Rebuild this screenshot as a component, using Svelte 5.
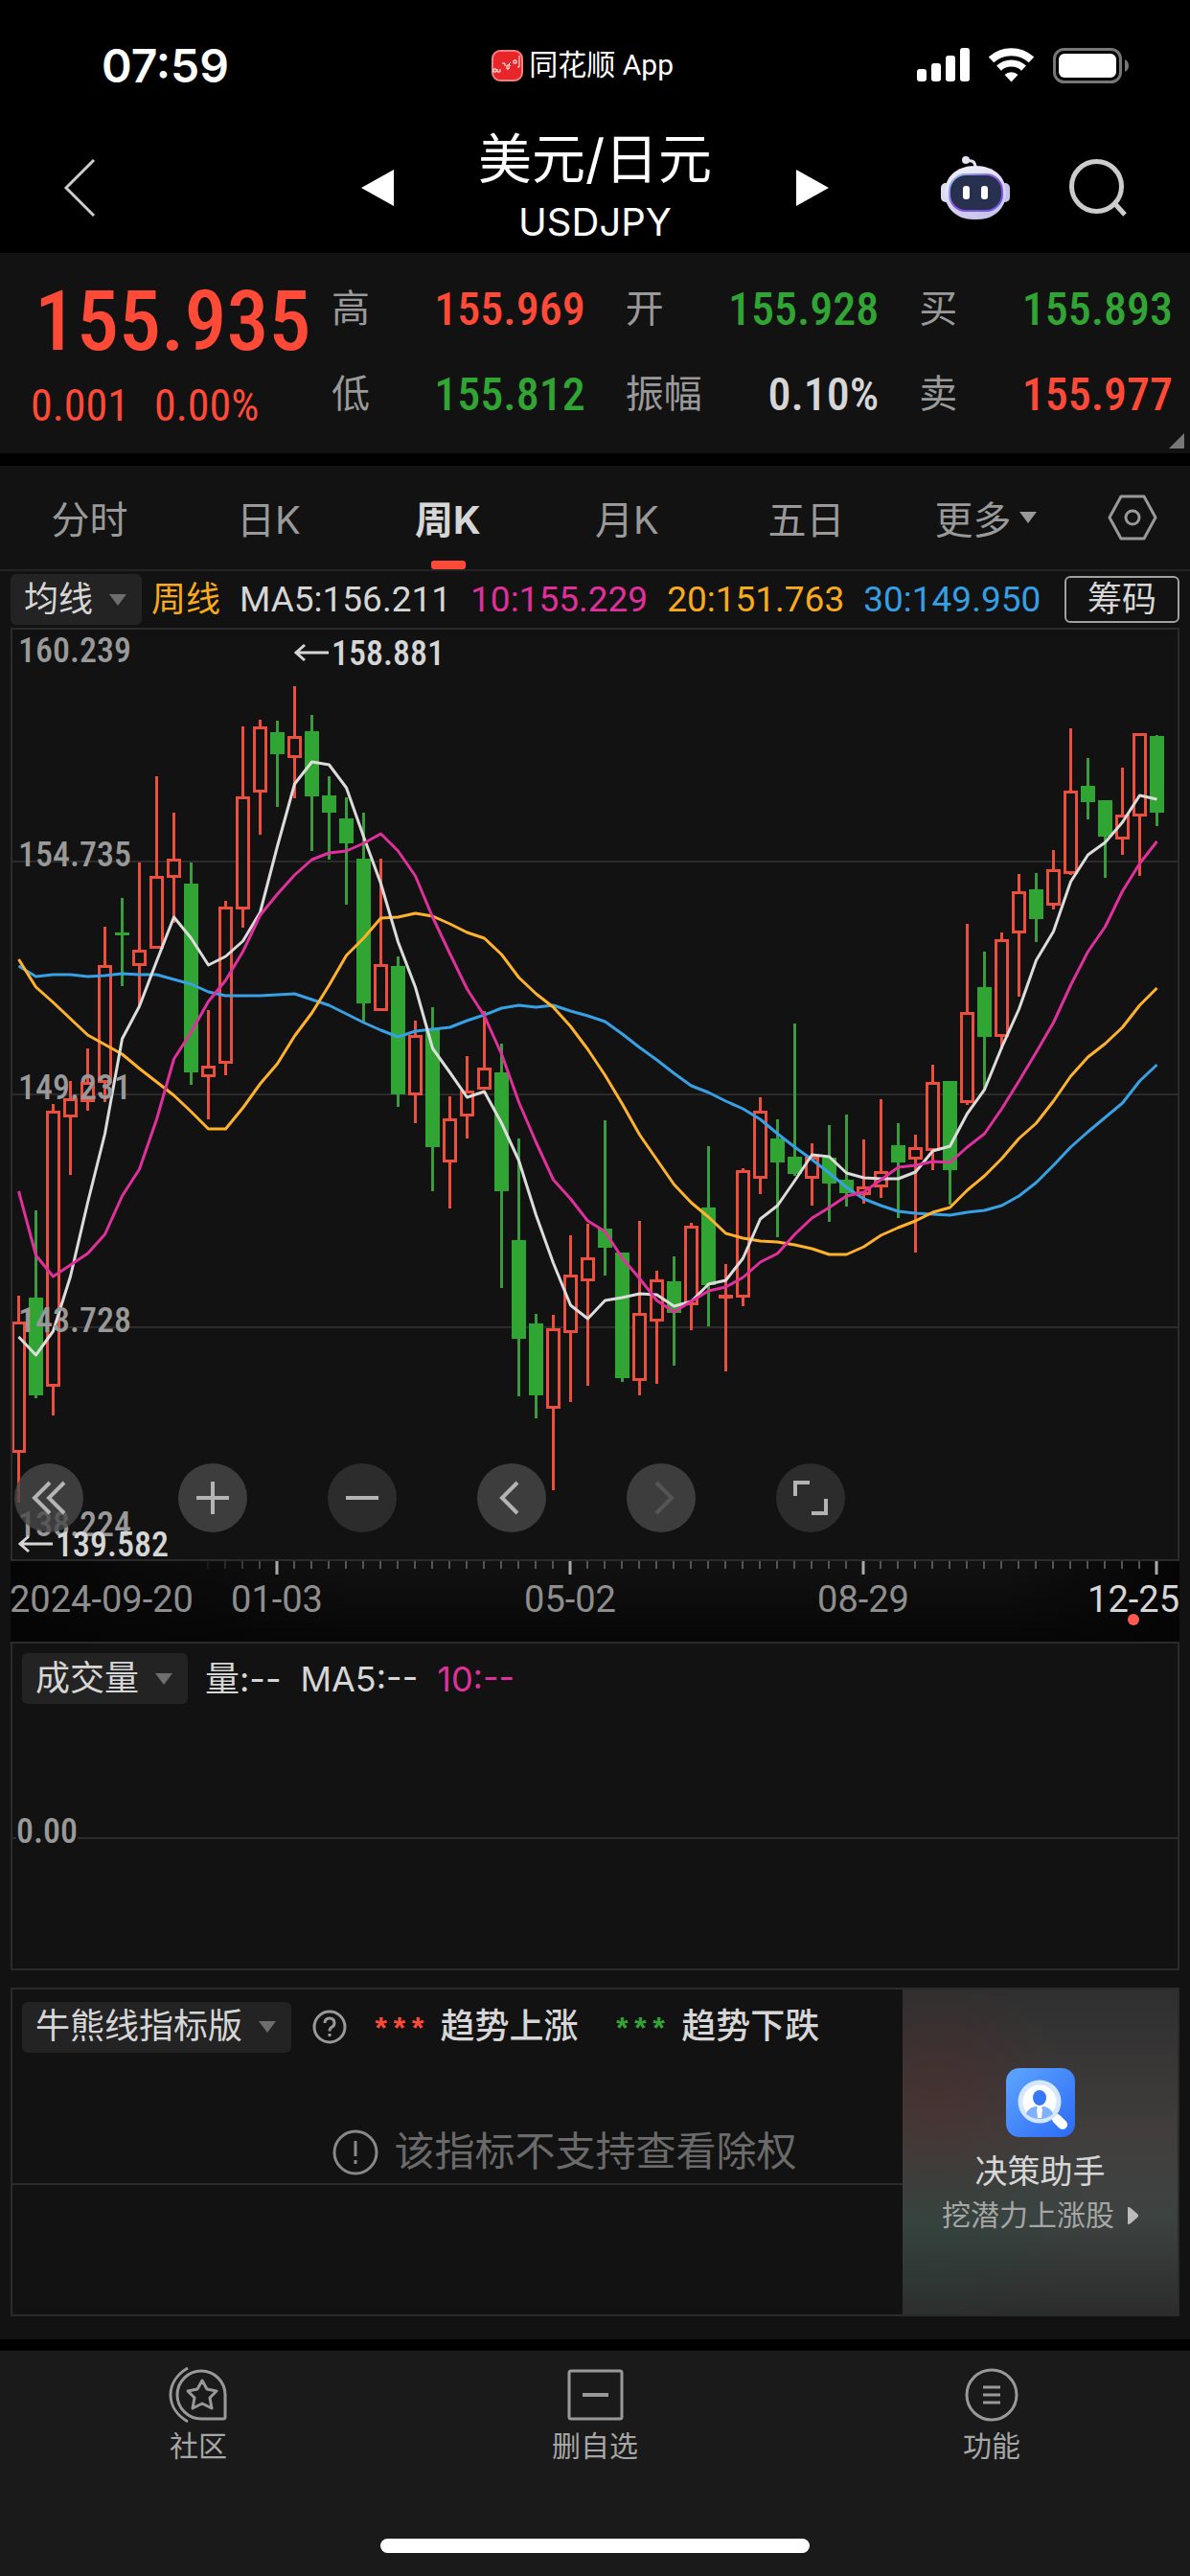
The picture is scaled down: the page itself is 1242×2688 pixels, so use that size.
<!-- script -->
<script lang="ts">
  /* types */
  type Candle = [kind: 'up' | 'down', high: number, top: number, bottom: number, low: number]

  /* quote */
  const stats = [
    { label: '高', value: '155.969', tone: 'red' },
    { label: '开', value: '155.928', tone: 'green' },
    { label: '买', value: '155.893', tone: 'green' },
    { label: '低', value: '155.812', tone: 'green' },
    { label: '振幅', value: '0.10%', tone: 'plain' },
    { label: '卖', value: '155.977', tone: 'red' }
  ]

  /* periods */
  const periods = ['分时', '日K', '周K', '月K', '五日']
  let period = $state('周K')

  /* chart geometry */
  const STEP = 18
  const HALF = 7.5
  const x = (i: number) => 8.5 + i * STEP

  const candles: Candle[] = [
    ['up', 712, 739, 876, 928],
    ['down', 623, 714, 816, 819],
    ['up', 512, 519, 807, 837],
    ['up', 488, 506, 526, 586],
    ['up', 454, 489, 510, 519],
    ['up', 327, 367, 490, 510],
    ['down', 297, 333, 336, 389],
    ['up', 260, 351, 368, 410],
    ['up', 170, 274, 350, 350],
    ['up', 208, 256, 276, 323],
    ['down', 260, 282, 479, 492],
    ['up', 414, 472, 484, 528],
    ['up', 300, 306, 470, 482],
    ['up', 118, 191, 309, 328],
    ['up', 111, 118, 187, 231],
    ['down', 112, 124, 147, 202],
    ['up', 76, 128, 151, 193],
    ['down', 106, 123, 191, 248],
    ['down', 170, 190, 208, 257],
    ['down', 192, 214, 240, 304],
    ['down', 208, 256, 407, 426],
    ['up', 256, 366, 415, 415],
    ['down', 358, 368, 502, 515],
    ['up', 425, 440, 503, 532],
    ['down', 411, 434, 557, 603],
    ['up', 504, 527, 573, 621],
    ['up', 462, 498, 525, 548],
    ['up', 415, 474, 497, 497],
    ['down', 449, 479, 603, 704],
    ['down', 548, 654, 757, 817],
    ['down', 731, 741, 816, 840],
    ['up', 732, 746, 830, 915],
    ['up', 649, 690, 751, 823],
    ['up', 637, 672, 697, 806],
    ['down', 529, 642, 662, 691],
    ['down', 667, 667, 798, 802],
    ['up', 634, 730, 801, 816],
    ['up', 686, 695, 739, 804],
    ['down', 671, 697, 730, 785],
    ['up', 636, 639, 722, 748],
    ['down', 556, 620, 701, 744],
    ['up', 679, 711, 715, 791],
    ['up', 579, 581, 714, 723],
    ['up', 505, 519, 590, 606],
    ['down', 528, 548, 573, 651],
    ['down', 428, 567, 585, 587],
    ['up', 553, 567, 590, 618],
    ['down', 534, 568, 595, 635],
    ['down', 523, 591, 605, 619],
    ['up', 549, 598, 607, 616],
    ['up', 507, 582, 599, 610],
    ['down', 532, 555, 573, 631],
    ['up', 544, 557, 570, 667],
    ['up', 471, 489, 561, 581],
    ['down', 488, 488, 581, 617],
    ['up', 324, 416, 511, 513],
    ['down', 353, 390, 442, 497],
    ['up', 333, 340, 442, 455],
    ['up', 272, 290, 334, 400],
    ['down', 271, 288, 319, 343],
    ['up', 247, 267, 305, 309],
    ['up', 120, 185, 272, 273],
    ['down', 151, 180, 197, 215],
    ['down', 195, 195, 233, 276],
    ['up', 161, 210, 236, 252],
    ['up', 125, 125, 212, 274],
    ['down', 127, 128, 208, 222]
  ]

  const averages = [
    {
      name: 'ma30',
      values: [
        368, 379, 377, 377, 379, 378, 376, 377, 377, 382, 387, 395, 399, 399, 399, 398, 397, 403, 409, 418, 427, 435, 442,
        436, 434, 432, 425, 419, 412, 409, 411, 409, 415, 420, 426, 439, 453, 466, 480, 493, 500, 509, 517, 528, 543, 557,
        570, 584, 599, 611, 618, 624, 626, 627, 628, 625, 623, 618, 608, 594, 576, 557, 541, 526, 511, 488, 471
      ]
    },
    {
      name: 'ma20',
      values: [
        361, 390, 406, 423, 440, 450, 460, 475, 489, 503, 520, 538, 538, 516, 491, 470, 441, 417, 388, 357, 339, 318, 317,
        313, 316, 324, 333, 339, 356, 380, 397, 411, 431, 455, 482, 512, 544, 570, 596, 615, 630, 647, 652, 655, 656, 659,
        663, 669, 669, 661, 649, 641, 634, 625, 620, 602, 587, 569, 548, 532, 509, 483, 463, 449, 432, 409, 391
      ]
    },
    {
      name: 'ma5',
      values: [
        755, 774, 749, 692, 615, 543, 444, 410, 363, 317, 339, 367, 358, 342, 312, 243, 178, 155, 158, 182, 233, 282, 343,
        390, 454, 479, 505, 499, 532, 571, 628, 678, 722, 736, 717, 714, 710, 711, 723, 718, 700, 696, 673, 632, 618, 592,
        565, 567, 584, 589, 590, 590, 583, 561, 556, 522, 497, 453, 413, 362, 332, 280, 252, 239, 218, 190, 194
      ]
    },
    {
      name: 'ma10',
      values: [
        603, 670, 692, 680, 668, 648, 608, 580, 528, 465, 437, 405, 383, 353, 315, 293, 273, 257, 250, 248, 240, 230, 248,
        274, 317, 355, 392, 420, 460, 510, 552, 591, 611, 634, 645, 673, 694, 717, 729, 718, 707, 703, 693, 677, 668, 648,
        631, 620, 608, 604, 591, 578, 576, 572, 573, 557, 543, 517, 488, 458, 427, 388, 353, 327, 290, 261, 238
      ]
    }
  ]

  const gridLines = [259, 502, 745]
  const priceLabels = [
    { text: '160.239', y: 51 },
    { text: '154.735', y: 264 },
    { text: '149.231', y: 507 },
    { text: '143.728', y: 750 },
    { text: '138.224', y: 963 }
  ]

  /* date axis */
  const ticks = Array.from({ length: 56 }, (_, n) => n + 11)
  const dates: Record<number, string> = { 15: '01-03', 32: '05-02', 49: '08-29' }
  const isMajor = (i: number) => i in dates || i === 66

  const linePoints = (values: number[]) => values.map((y, i) => `${x(i)},${y}`).join(' ')
</script>

<!-- template -->
{#snippet caret()}
  <svg class="caret" viewBox="0 0 18 12" aria-hidden="true"><path d="M0 0h18l-9 12z" /></svg>
{/snippet}

{#snippet callout(text: string, left: number, y: number)}
  <path class="arrow" d="M{left + 35} {y - 13}h-34m9 -8l-9 8l9 8" />
  <text class="mark" x={left + 38} {y}>{text}</text>
{/snippet}

<div class="app">
  <div class="status-bar">
    <span class="clock">07:59</span>
    <span class="source">
      <svg class="source-logo" viewBox="0 0 33 33" aria-hidden="true">
        <rect x="1" y="1" width="31" height="31" rx="8" fill="#e8262a" stroke="#f08080" stroke-width="2" />
        <path d="M2 20h3v3h-3zM6 20v3h3v-3M11 14h3v3M16 16v4h2v-4zM20 13l-2 2 2 2M23 11h3v3h-3zM29 6v12h-2" fill="none" stroke="#fff" stroke-width="1" />
      </svg>
      同花顺 App
    </span>
    <span class="signals">
      <svg width="55" height="36" viewBox="0 0 55 36" fill="#fff" aria-hidden="true">
        <rect x="0" y="22" width="10" height="13" rx="3" />
        <rect x="15" y="16" width="10" height="19" rx="3" />
        <rect x="30" y="8" width="10" height="27" rx="3" />
        <rect x="45" y="0" width="10" height="35" rx="3" />
      </svg>
      <svg width="47" height="36" viewBox="0 0 47 36" fill="none" stroke="#fff" aria-hidden="true">
        <path d="M2.5 12.4A31 31 0 0 1 44.500 12.400" stroke-width="8" />
        <path d="M10.500 21.100A19 19 0 0 1 36.500 21.100" stroke-width="7" />
        <path d="M23.500 35.500L16.500 28A10 10 0 0 1 30.500 28Z" fill="#fff" stroke="none" />
      </svg>
      <svg width="79" height="37" viewBox="0 0 79 37" aria-hidden="true">
        <rect x="1.500" y="1.500" width="69" height="34" rx="10" fill="none" stroke="#777" stroke-width="3" />
        <rect x="6" y="6" width="60" height="25" rx="6" fill="#fff" />
        <path d="M75 12q4 2 4 6.500t-4 6.500z" fill="#777" />
      </svg>
    </span>
  </div>

  <header class="header">
    <div class="header-side">
      <button class="icon-button" aria-label="返回">
        <svg width="34" height="60" viewBox="0 0 34 60" fill="none" stroke="#ccc" stroke-width="3"><path d="M32 1L3 30l29 29" /></svg>
      </button>
      <button class="icon-button" aria-label="上一个">
        <svg width="34" height="38" viewBox="0 0 34 38" fill="#fff"><path d="M34 0v38L0 19z" /></svg>
      </button>
    </div>
    <h1 class="title">美元/日元<small>USDJPY</small></h1>
    <div class="header-side right">
      <button class="icon-button" aria-label="下一个">
        <svg width="34" height="38" viewBox="0 0 34 38" fill="#fff"><path d="M0 0v38l34-19z" /></svg>
      </button>
      <div class="header-actions">
        <button class="icon-button" aria-label="智能助手">
          <svg width="72" height="67" viewBox="0 0 72 67">
            <defs>
              <linearGradient id="shell" x1="0" y1="0" x2="0.400" y2="1">
                <stop offset="0" stop-color="#f4f4fc" />
                <stop offset="1" stop-color="#c9c6ee" />
              </linearGradient>
              <linearGradient id="rim" x1="0" y1="0" x2="1" y2="1">
                <stop offset="0" stop-color="#8fd0e8" />
                <stop offset="0.500" stop-color="#8a4fe0" />
                <stop offset="1" stop-color="#6a5ae8" />
              </linearGradient>
            </defs>
            <rect x="0" y="28" width="12" height="20" rx="5" fill="#dcdcf0" />
            <rect x="60" y="28" width="12" height="20" rx="5" fill="#c3c0ea" />
            <path d="M27 5q9-2 9 7" fill="none" stroke="#dfe0f2" stroke-width="3" />
            <circle cx="26" cy="4" r="4" fill="#e4e4f4" />
            <path d="M36 10C56 10 68 22 68 38S56 66 38 66H34C16 66 4 54 4 38S16 10 36 10Z" fill="url(#shell)" />
            <rect x="9" y="19" width="55" height="38" rx="17" fill="#27304f" stroke="url(#rim)" stroke-width="2" />
            <rect x="23" y="31" width="7" height="14" rx="3" fill="#fff" />
            <rect x="42" y="31" width="7" height="14" rx="3" fill="#fff" />
          </svg>
        </button>
        <button class="icon-button" aria-label="搜索">
          <svg width="60" height="60" viewBox="0 0 60 60" fill="none" stroke="#ccc"><circle cx="28.500" cy="28.500" r="26" stroke-width="5" /><path d="M48 47l10 11" stroke-width="5" /></svg>
        </button>
      </div>
    </div>
  </header>

  <section class="quote">
    <div class="last">
      <strong class="price">155.935</strong>
      <div class="change"><span>0.001</span><span>0.00%</span></div>
    </div>
    <dl class="stats">
      {#each stats as stat}
        <div class="stat">
          <dt>{stat.label}</dt>
          <dd class={stat.tone}>{stat.value}</dd>
        </div>
      {/each}
    </dl>
    <span class="corner"></span>
  </section>

  <nav class="tabs">
    {#each periods as item}
      <button class="tab" class:active={period === item} onclick={() => (period = item)}>{item}</button>
    {/each}
    <button class="tab more" aria-haspopup="menu">更多{@render caret()}</button>
    <button class="settings" aria-label="设置">
      <svg width="52" height="48" viewBox="0 0 52 48" fill="none" stroke="#999" stroke-width="3"><path d="M14 2h24l12 22l-12 22h-24l-12-22z" stroke-linejoin="round" /><circle cx="26" cy="24" r="7" /></svg>
    </button>
  </nav>

  <div class="legend">
    <label class="picker">
      <select aria-label="主图指标"><option>均线</option></select>
      {@render caret()}
    </label>
    <div class="legend-values">
      <span class="amber period-name">周线</span>
      <span>MA5:156.211</span>
      <span class="pink">10:155.229</span>
      <span class="amber">20:151.763</span>
      <span class="blue">30:149.950</span>
    </div>
    <button class="chips">筹码</button>
  </div>

  <section class="chart">
    <svg class="plot" viewBox="0 15 1220 974" role="img" aria-label="美元/日元 周K">
      {#each gridLines as y}
        <path class="grid" d="M0 {y}h1220" />
      {/each}
      {#each candles as [kind, high, top, bottom, low], i}
        <path class="wick {kind}" d="M{x(i)} {high}V{low}" />
        {#if kind === 'up' && bottom - top > 5}
          <rect class="body up" x={x(i) - HALF + 1.5} y={top + 1.5} width="12" height={bottom - top - 3} />
        {:else}
          <rect class="solid {kind}" x={x(i) - HALF} y={top} width="15" height={bottom - top} />
        {/if}
      {/each}
      {#each averages as line}
        <polyline class="average {line.name}" points={linePoints(line.values)} />
      {/each}
      <rect class="frame" x="1" y="16" width="1218" height="972" />
      {#each priceLabels as label}
        <text class="scale" x="8" y={label.y}>{label.text}</text>
      {/each}
      {@render callout('158.881', 297, 54)}
      {@render callout('139.582', 9, 984)}
    </svg>

    <div class="tools">
      <button class="tool first" aria-label="快退">
        <svg viewBox="0 0 36 36"><path d="M19 2L3 18l16 16M34 2L18 18l16 16" /></svg>
      </button>
      <button class="tool" aria-label="放大">
        <svg viewBox="0 0 36 36"><path d="M1 18h34M18 1v34" /></svg>
      </button>
      <button class="tool dim" aria-label="缩小">
        <svg viewBox="0 0 36 36"><path d="M1 18h34" /></svg>
      </button>
      <button class="tool" aria-label="左移">
        <svg viewBox="0 0 36 36"><path d="M24 2L8 18l16 16" /></svg>
      </button>
      <button class="tool" aria-label="右移" disabled>
        <svg viewBox="0 0 36 36"><path d="M13 2l16 16l-16 16" /></svg>
      </button>
      <button class="tool dim" aria-label="全屏">
        <svg viewBox="0 0 36 36"><path d="M2 16V2h15M34 19v15H19" /></svg>
      </button>
    </div>
  </section>

  <svg class="axis" viewBox="0 0 1220 84" aria-label="日期">
    {#each ticks as i}
      <path class="tick" class:major={isMajor(i)} d="M{8 + i * STEP} 0v{isMajor(i) ? 14 : 8}" opacity={i < 15 ? (i - 10) / 5 : 1} />
    {/each}
    <text x="-1" y="53">2024-09-20</text>
    {#each Object.entries(dates) as [i, date]}
      <text x={8 + Number(i) * STEP} y="53" text-anchor="middle">{date}</text>
    {/each}
    <text class="today" x="1220" y="53" text-anchor="end">12-25</text>
    <circle cx="1172" cy="61" r="6" fill="#ff5a50" />
  </svg>

  <section class="panel">
    <div class="upper">
      <div class="panel-head">
        <label class="picker">
          <select aria-label="副图指标一"><option>成交量</option></select>
          {@render caret()}
        </label>
        <div class="legend-values volume">
          <span>量:--</span>
          <span>MA5:--</span>
          <span class="pink">10:--</span>
        </div>
      </div>
      <span class="zero">0.00</span>
    </div>
    <div class="lower"></div>
  </section>

  <section class="panel trend">
    <div class="trend-main">
      <div class="upper">
        <div class="panel-head">
          <label class="picker">
            <select aria-label="副图指标二"><option>牛熊线指标版</option></select>
            {@render caret()}
          </label>
          <button class="help" aria-label="指标说明">
            <svg width="36" height="36" viewBox="0 0 36 36" fill="none" stroke="#999" stroke-width="3"><circle cx="18" cy="18" r="16" /><path d="M13 14q0-5 5-5t5 5q0 3-3 4.500q-2 1-2 4" /><path d="M18 25v3" /></svg>
          </button>
          <span class="trend-key"><i class="stars red">***</i>趋势上涨</span>
          <span class="trend-key"><i class="stars green">***</i>趋势下跌</span>
        </div>
        <p class="notice">
          <svg width="48" height="48" viewBox="0 0 48 48" fill="none" stroke="#888" stroke-width="3"><circle cx="24" cy="24" r="22" /><path d="M24 12v16M24 32v4" /></svg>
          该指标不支持查看除权
        </p>
      </div>
      <div class="lower"></div>
    </div>
    <a class="promo" href="#assistant">
      <svg width="72" height="72" viewBox="0 0 72 72" aria-hidden="true">
        <defs>
          <linearGradient id="tile" x1="0" y1="0" x2="1" y2="1">
            <stop offset="0" stop-color="#5ea6ff" />
            <stop offset="1" stop-color="#2b6af5" />
          </linearGradient>
        </defs>
        <rect width="72" height="72" rx="14" fill="url(#tile)" />
        <path d="M53 53l6 6" stroke="#fff" stroke-width="10" stroke-linecap="round" />
        <circle cx="35" cy="35" r="20" fill="#fff" stroke="#d5e6ff" stroke-width="5" />
        <ellipse cx="35" cy="31" rx="7" ry="8" fill="#3579f6" />
        <path d="M21 48q3-8 11-8l3 6l3-6q8 0 11 8q-6 5-14 5t-14-5z" fill="#7fb2fb" />
        <path d="M35 40l3 3l-1 9h-4l-1-9z" fill="#fff" />
      </svg>
      <span class="promo-title">决策助手</span>
      <span class="promo-sub">
        挖潜力上涨股
        <svg width="11" height="18" viewBox="0 0 11 18" fill="#bbb" aria-hidden="true"><path d="M0 0q2 0 3 1l7 6q2 2 0 4l-7 6q-1 1-3 1z" /></svg>
      </span>
    </a>
  </section>

  <footer class="footer">
    <div class="actions">
      <button class="action">
        <svg viewBox="0 0 62 60">
          <path d="M20 2C-4 16-4 44 20 58" />
          <path d="M59 53V30A25 25 0 1 0 34 55H57Q59 55 59 53Z" />
          <path d="M35 15l5 9l10 2l-7 7l2 11l-10-5l-10 5l2-11l-7-7l10-2z" />
        </svg>
        社区
      </button>
      <button class="action">
        <svg viewBox="0 0 62 60"><rect x="4" y="5" width="55" height="50" rx="2" /><path d="M18 30h27" stroke-width="4" /></svg>
        删自选
      </button>
      <button class="action">
        <svg viewBox="0 0 62 60"><circle cx="31" cy="30" r="26" /><path d="M22 22h18M22 30h18M22 38h18" /></svg>
        功能
      </button>
    </div>
    <div class="home-indicator"></div>
  </footer>
</div>

<!-- styles -->
<style>
  :global(body) {
    margin: 0;
    background: #121212;
  }

  /* base */
  .app {
    --red: #ff4a38;
    --green: #31a533;
    --pink: #e0309c;
    --amber: #f9ab1c;
    --blue: #349fe3;
    --line: #2b2b2b;
    --panel: #121212;
    --digits: 'Roboto Condensed', Roboto, 'Noto Sans CJK SC', sans-serif;
    display: flex;
    flex-direction: column;
    min-height: 100vh;
    background: var(--panel);
    color: #d6d6d6;
    font-family: Roboto, 'Noto Sans CJK SC', sans-serif;
    font-size: 36px;
  }
  button,
  select {
    padding: 0;
    border: 0;
    background: none;
    color: inherit;
    font: inherit;
    cursor: pointer;
  }
  svg {
    display: block;
    flex-shrink: 0;
  }
  .red {
    color: var(--red);
  }
  .green {
    color: var(--green);
  }
  .pink {
    color: var(--pink);
  }
  .amber {
    color: var(--amber);
  }
  .blue {
    color: var(--blue);
  }
  .caret {
    width: 18px;
    height: 12px;
    fill: #6e6e6e;
    pointer-events: none;
  }

  /* status bar */
  .status-bar {
    display: flex;
    align-items: center;
    height: 104px;
    padding: 16px 64px 0 106px;
    background: #000;
    color: #fff;
  }
  .clock {
    flex: 0 0 38%;
    font-family: Inter, sans-serif;
    font-size: 48px;
    font-weight: 600;
  }
  .source {
    display: flex;
    align-items: center;
    gap: 6px;
    font-size: 30px;
    line-height: 36px;
  }
  .source-logo {
    width: 33px;
    height: 33px;
  }
  .signals {
    display: flex;
    align-items: center;
    gap: 20px;
    margin-left: auto;
  }

  /* header */
  .header {
    display: grid;
    grid-template-columns: 1fr 420px 1fr;
    align-items: center;
    height: 136px;
    padding-top: 8px;
    background: #000;
    color: #fff;
  }
  .header-side {
    display: flex;
    align-items: center;
    justify-content: space-between;
    padding-left: 66px;
  }
  .header-side.right {
    padding: 0 66px 0 0;
  }
  .header-actions {
    display: flex;
    align-items: center;
    gap: 62px;
  }
  .title {
    display: flex;
    flex-direction: column;
    margin: 0;
    font-family: Inter, 'Noto Sans CJK SC', sans-serif;
    font-size: 56px;
    font-weight: 400;
    line-height: 72px;
    text-align: center;
  }
  .title small {
    font-size: 40px;
    line-height: 60px;
  }

  /* quote */
  .quote {
    position: relative;
    display: flex;
    height: 209px;
    border-bottom: 13px solid #000;
  }
  .last {
    flex: 0 0 314px;
    padding: 23px 0 0 32px;
    color: var(--red);
    font-family: var(--digits);
    white-space: nowrap;
  }
  .price {
    display: block;
    padding-left: 4px;
    font-size: 88px;
    font-weight: 500;
    line-height: 96px;
  }
  .change {
    display: flex;
    gap: 26px;
    font-size: 46px;
    line-height: 80px;
  }
  .stats {
    flex: 1;
    display: grid;
    grid-template-columns: repeat(3, 1fr);
    grid-auto-rows: 89px;
    column-gap: 42px;
    margin: 0;
    padding: 14px 18px 0 0;
  }
  .stat {
    display: flex;
    align-items: center;
    justify-content: space-between;
  }
  .stat dt {
    color: #999;
    font-size: 40px;
    line-height: 56px;
  }
  .stat dd {
    margin: 0;
    font-family: var(--digits);
    font-size: 48px;
    font-weight: 500;
  }
  .corner {
    position: absolute;
    right: 6px;
    bottom: 5px;
    border-left: 16px solid transparent;
    border-bottom: 16px solid #777;
  }

  /* period tabs */
  .tabs {
    display: grid;
    grid-template-columns: repeat(6, 187fr) 120fr;
    height: 108px;
    border-bottom: 2px solid #242424;
    color: #999;
    font-family: Inter, 'Noto Sans CJK SC', sans-serif;
    font-size: 40px;
  }
  .tab {
    position: relative;
  }
  .tab.active {
    color: #d6d6d6;
    font-weight: 700;
  }
  .tab.active::after {
    content: '';
    position: absolute;
    bottom: 0;
    left: 50%;
    width: 36px;
    height: 9px;
    margin-left: -18px;
    border-radius: 3px;
    background: var(--red);
  }
  .more {
    display: flex;
    align-items: center;
    justify-content: center;
    gap: 8px;
  }
  .more .caret {
    fill: #999;
  }
  .settings {
    display: flex;
    align-items: center;
    justify-content: center;
  }

  /* indicator legend */
  .legend {
    display: flex;
    align-items: center;
    height: 59px;
    padding: 0 11px;
  }
  .picker {
    display: flex;
    align-items: center;
    gap: 16px;
    height: 53px;
    padding: 0 16px 0 14px;
    border-radius: 6px;
    background: #232323;
  }
  .picker select {
    appearance: none;
    outline: none;
  }
  .legend-values {
    display: flex;
    align-items: baseline;
    gap: 20px;
    margin-left: 10px;
    font-size: 37px;
    line-height: 48px;
    white-space: nowrap;
  }
  .period-name {
    font-size: 36px;
  }
  .legend-values.volume {
    margin-left: 18px;
    font-family: Inter, 'Noto Sans CJK SC', sans-serif;
    font-size: 36px;
  }
  .chips {
    width: 120px;
    height: 49px;
    margin-left: auto;
    border: 2px solid #a0a0a0;
    border-radius: 6px;
    line-height: 44px;
  }

  /* chart */
  .chart {
    position: relative;
    margin: 0 11px;
  }
  .plot,
  .axis {
    width: 100%;
    height: auto;
  }
  .grid {
    stroke: var(--line);
    stroke-width: 2;
  }
  .frame {
    fill: none;
    stroke: var(--line);
    stroke-width: 2;
  }
  .wick {
    stroke-width: 3;
  }
  .wick.up,
  .body.up {
    stroke: #ec4f3d;
  }
  .wick.down {
    stroke: #3a9c3c;
  }
  .body {
    fill: var(--panel);
    stroke-width: 3;
  }
  .solid.up {
    fill: #ec4f3d;
  }
  .solid.down {
    fill: #31a533;
  }
  .average {
    fill: none;
    stroke-width: 3;
    stroke-linejoin: round;
  }
  .ma5 {
    stroke: #dcdcdc;
  }
  .ma10 {
    stroke: var(--pink);
  }
  .ma20 {
    stroke: #ffb22c;
  }
  .ma30 {
    stroke: #38a0e4;
  }
  .scale,
  .mark {
    fill: #999;
    font-family: var(--digits);
    font-size: 36px;
    font-weight: 500;
  }
  .mark {
    fill: #d6d6d6;
  }
  .arrow {
    fill: none;
    stroke: #d6d6d6;
    stroke-width: 3;
  }
  .tools {
    position: absolute;
    bottom: 30px;
    left: 4px;
    display: flex;
    gap: 84px;
  }
  .tool {
    display: flex;
    align-items: center;
    justify-content: center;
    width: 72px;
    height: 72px;
    border-radius: 50%;
    background: rgba(72, 72, 72, 0.8);
  }
  .tool.first {
    margin-right: 15px;
  }
  .tool.dim {
    background: #2c2c2c;
  }
  .tool svg {
    width: 36px;
    height: 36px;
    fill: none;
    stroke: #b4b4b4;
    stroke-width: 4;
  }
  .tool:disabled svg {
    stroke: #555;
  }

  /* date axis */
  .axis {
    width: auto;
    margin: 0 11px;
    background: linear-gradient(90deg, #050505, transparent 30%, transparent 85%, #050505), linear-gradient(#121212, #060606);
    font-size: 38px;
  }
  .axis text {
    fill: #8e8e8e;
  }
  .axis .today {
    fill: #d6d6d6;
  }
  .tick {
    stroke: #555;
    stroke-width: 2;
  }
  .tick.major {
    stroke: #aaa;
    stroke-width: 3;
  }

  /* sub panels */
  .panel {
    margin: 0 11px 18px;
    border: 2px solid var(--line);
  }
  .upper {
    position: relative;
    display: flex;
    flex-direction: column;
    justify-content: space-between;
    height: 202px;
    border-bottom: 2px solid var(--line);
  }
  .lower {
    height: 135px;
  }
  .panel-head {
    display: flex;
    align-items: center;
    padding: 10px 10px 0;
  }
  .zero {
    position: absolute;
    bottom: -12px;
    left: 4px;
    background: var(--panel);
    color: #999;
    font-family: var(--digits);
    font-weight: 500;
    line-height: 36px;
  }
  .trend {
    display: grid;
    grid-template-columns: 1fr 287px;
    margin-bottom: 24px;
  }
  .help {
    margin: 0 10px 0 22px;
  }
  .trend-key {
    display: flex;
    align-items: center;
    gap: 14px;
    margin: 0 20px 0 16px;
    font-weight: 500;
    line-height: 48px;
  }
  .stars {
    padding-top: 10px;
    font-family: 'Liberation Mono', monospace;
    font-size: 32px;
    font-style: normal;
    font-weight: 700;
  }
  .notice {
    display: flex;
    align-items: center;
    gap: 16px;
    margin: 0;
    padding: 0 0 8px 36%;
    color: #6a6a6a;
    font-size: 42px;
    line-height: 48px;
  }
  .promo {
    display: flex;
    flex-direction: column;
    align-items: center;
    justify-content: center;
    background:
      radial-gradient(circle at 12% 34%, rgba(90, 35, 35, 0.35), transparent 40%),
      radial-gradient(circle at 12% 70%, rgba(30, 70, 55, 0.25), transparent 45%),
      linear-gradient(#2f2f2f, #413e3d 45%, #3d4341 70%, #2c2c2c);
    color: #d6d6d6;
    text-decoration: none;
  }
  .promo-title {
    margin-top: 12px;
    font-size: 34px;
    line-height: 48px;
  }
  .promo-sub {
    display: flex;
    align-items: center;
    gap: 14px;
    color: #a6a6a6;
    font-size: 30px;
    line-height: 44px;
  }

  /* footer */
  .footer {
    flex: 1;
    display: flex;
    flex-direction: column;
    justify-content: space-between;
    min-height: 160px;
    padding: 16px 0 24px;
    border-top: 12px solid #000;
    background: #1a1a1a;
    color: #a6a6a6;
    font-size: 30px;
  }
  .actions {
    display: grid;
    grid-template-columns: repeat(3, 1fr);
  }
  .action {
    display: flex;
    flex-direction: column;
    align-items: center;
    line-height: 48px;
  }
  .action svg {
    width: 62px;
    height: 60px;
    fill: none;
    stroke: #999;
    stroke-width: 3;
    stroke-linejoin: round;
  }
  .home-indicator {
    width: 36%;
    height: 15px;
    margin: 0 auto;
    border-radius: 8px;
    background: #fff;
  }
</style>
